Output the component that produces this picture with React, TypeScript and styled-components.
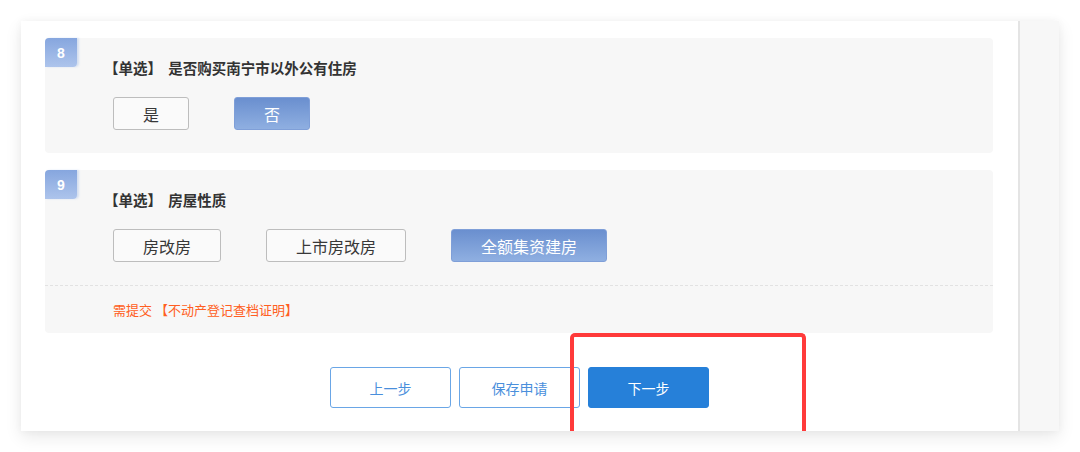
import React from 'react';
import styled, { createGlobalStyle } from 'styled-components';

const GlobalStyle = createGlobalStyle`
  html, body {
    margin: 0;
    padding: 0;
    background: #ffffff;
    font-family: "Noto Sans CJK SC", "Noto Sans", sans-serif;
  }
`;

const Page = styled.div`
  padding: 21px 21px 0 21px;
  width: 1080px;
  height: 452px;
  box-sizing: border-box;
`;

const Card = styled.div`
  position: relative;
  display: flex;
  width: 1038px;
  height: 410px;
  background: #ffffff;
  box-shadow: 0 6px 16px rgba(0, 0, 0, 0.09), 0 0 8px rgba(0, 0, 0, 0.04);
`;

const Main = styled.div`
  width: 999px;
  box-sizing: border-box;
  padding: 17px 25px 0 24px;
  border-right: 2px solid #e4e4e4;
  display: flex;
  flex-direction: column;
  gap: 17px;
`;

const Side = styled.div`
  flex: 1;
  background: #f7f7f7;
`;

const Question = styled.div`
  position: relative;
  background: #f7f7f7;
  border-radius: 4px;
`;

const Body = styled.div`
  padding: 22px 0 23px 65px;
`;

const Badge = styled.div`
  position: absolute;
  left: 0;
  top: 0;
  width: 32px;
  height: 29px;
  border-radius: 4px 0 4px 0;
  background: linear-gradient(180deg, #86a6de 0%, #adc4ec 100%);
  box-shadow: 2px 0 2px rgba(150, 180, 230, 0.35);
  color: #ffffff;
  font-family: "Liberation Sans", Arial, sans-serif;
  font-weight: bold;
  font-size: 14px;
  display: flex;
  align-items: center;
  justify-content: center;
`;

const Title = styled.div`
  font-size: 14.5px;
  line-height: 16px;
  font-weight: bold;
  color: #333333;
  word-spacing: 3px;
  margin-left: -6px;
`;

const Options = styled.div`
  display: flex;
  gap: 45px;
  margin-top: 21px;
  margin-left: 3px;
`;

const Option = styled.div<{ $active?: boolean }>`
  height: 33px;
  box-sizing: border-box;
  padding: 0 29px;
  border-radius: 3px;
  display: flex;
  align-items: center;
  justify-content: center;
  font-size: 16px;
  border: 1px solid ${(p) => (p.$active ? '#7f9fd8' : '#bdbdbd')};
  background: ${(p) =>
    p.$active ? 'linear-gradient(180deg, #6a8fcf 0%, #8fafe1 100%)' : '#fafafa'};
  color: ${(p) => (p.$active ? '#ffffff' : '#383838')};
`;

const Divider = styled.div`
  border-top: 1px dashed #e2e2e2;
`;

const Notice = styled.div`
  padding: 15px 0 15px 68px;
  font-size: 13px;
  line-height: 17px;
  color: #ff5e22;
`;

const Actions = styled.div`
  display: flex;
  justify-content: center;
  gap: 8px;
  margin-top: 17px;
  padding-left: 1px;
`;

const ActionButton = styled.div<{ $primary?: boolean }>`
  width: 121px;
  height: 41px;
  box-sizing: border-box;
  border-radius: 3px;
  display: flex;
  align-items: center;
  justify-content: center;
  font-size: 14px;
  border: 1px solid ${(p) => (p.$primary ? '#2680d9' : '#6aa6e6')};
  background: ${(p) => (p.$primary ? '#2680d9' : '#ffffff')};
  color: ${(p) => (p.$primary ? '#ffffff' : '#4a8fdc')};
`;

const Highlight = styled.div`
  position: absolute;
  left: 549px;
  top: 312px;
  width: 236px;
  height: 98px;
  box-sizing: border-box;
  border: 4px solid #ff3a3a;
  border-bottom: none;
  border-radius: 5px 5px 0 0;
  pointer-events: none;
`;

type Q = {
  no: number;
  title: string;
  options: string[];
  active: number;
  notice?: string;
};

const questions: Q[] = [
  { no: 8, title: '是否购买南宁市以外公有住房', options: ['是', '否'], active: 1 },
  {
    no: 9,
    title: '房屋性质',
    options: ['房改房', '上市房改房', '全额集资建房'],
    active: 2,
    notice: '需提交 【不动产登记查档证明】',
  },
];

export default function App() {
  return (
    <>
      <GlobalStyle />
      <Page>
        <Card>
          <Main>
            {questions.map((q) => (
              <Question key={q.no}>
                <Badge>{q.no}</Badge>
                <Body>
                  <Title>【单选】 {q.title}</Title>
                  <Options>
                    {q.options.map((o, i) => (
                      <Option key={o} $active={i === q.active}>
                        {o}
                      </Option>
                    ))}
                  </Options>
                </Body>
                {q.notice && (
                  <>
                    <Divider />
                    <Notice>{q.notice}</Notice>
                  </>
                )}
              </Question>
            ))}
            <Actions>
              <ActionButton>上一步</ActionButton>
              <ActionButton>保存申请</ActionButton>
              <ActionButton $primary>下一步</ActionButton>
            </Actions>
          </Main>
          <Side />
          <Highlight />
        </Card>
      </Page>
    </>
  );
}
